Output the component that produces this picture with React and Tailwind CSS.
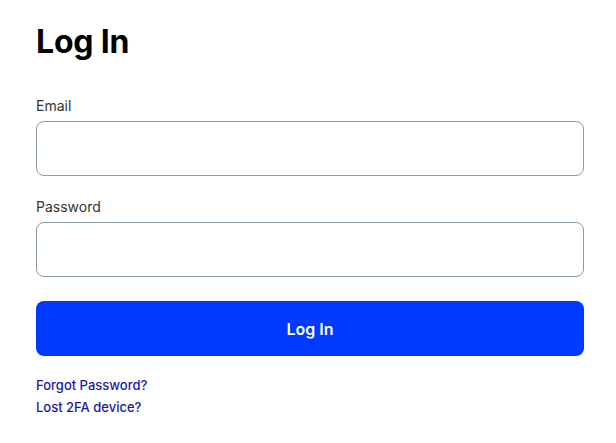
export default function App() {
  return (
    <div className="w-[616px] h-[443px] bg-white pl-9 pr-8 pt-[22px]" style={{ fontFamily: 'Inter, "Noto Sans", sans-serif' }}>
      <h1 className="text-[32px] leading-[40px] font-bold text-black tracking-[-0.2px]">Log In</h1>
      <div className="mt-[34px] flex flex-col">
        <label className="text-[14px] leading-[20px] text-[#333]">Email</label>
        <input className="mt-[5px] h-[55px] w-full rounded-[8px] border border-[#8a9ba8] outline-none" />
        <label className="mt-[21px] text-[14px] leading-[20px] text-[#333]">Password</label>
        <input type="password" className="mt-[5px] h-[55px] w-full rounded-[8px] border border-[#8a9ba8] outline-none" />
        <button className="mt-[24px] h-[55px] w-full rounded-[8px] bg-[#0039ff] text-white text-[16px] font-semibold">Log In</button>
        <div className="mt-[19px] flex flex-col gap-[2px]">
          <a className="text-[13px] leading-[20px] font-medium text-[#1b1ba0]">Forgot Password?</a>
          <a className="text-[13px] leading-[20px] font-medium text-[#1b1ba0]">Lost 2FA device?</a>
        </div>
      </div>
    </div>
  );
}
